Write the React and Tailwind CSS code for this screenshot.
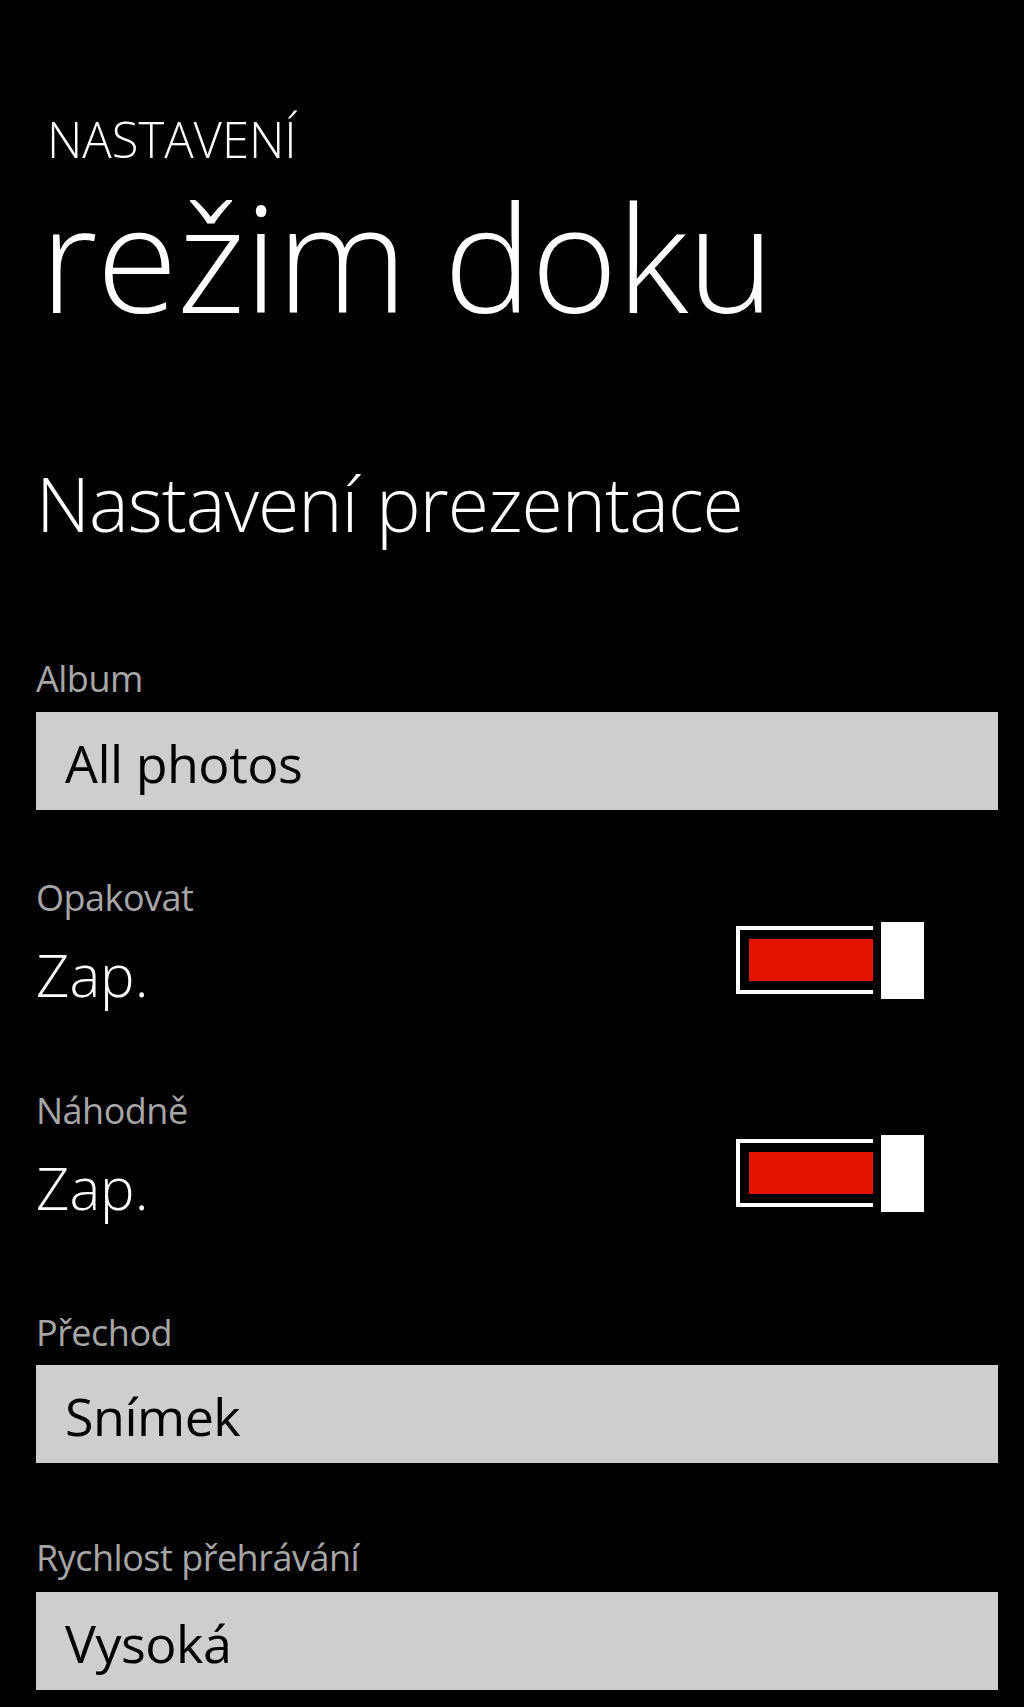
import React from "react";

function Toggle() {
  return (
    <div className="flex items-start">
      <div className="mt-[4px] flex h-[68px] w-[137px] border-[4px] border-r-0 border-white py-[9px] pl-[9px]">
        <div className="flex-1 bg-[#e51400]" />
      </div>
      <div className="ml-[8px] h-[77px] w-[43px] bg-white" />
    </div>
  );
}

function Label({ children, className = "" }) {
  return (
    <div className={"h-[44px] text-[36px] leading-[44px] tracking-[-0.5px] text-[#a6a6a6] " + className}>
      {children}
    </div>
  );
}

function Box({ children, className = "" }) {
  return (
    <div
      className={
        "h-[98px] bg-[#cecece] pl-[29px] pt-[4px] text-[52px] leading-[94px] tracking-[-0.5px] text-black " +
        className
      }
    >
      {children}
    </div>
  );
}

function ToggleRow({ className = "" }) {
  return (
    <div className={"flex items-start justify-between pr-[74px] " + className}>
      <div className="text-[58px] font-light leading-[105px] text-white">Zap.</div>
      <Toggle />
    </div>
  );
}

export default function App() {
  return (
    <div className="min-h-[1707px] w-full bg-black pb-[18px] pt-[109px] font-['Open_Sans','Noto_Sans',sans-serif] text-white">
      <div className="pl-[47px] text-[49px] font-light leading-[60px]">NASTAVENÍ</div>
      <div className="mt-[7px] pl-[40px] text-[148px] font-light leading-[160px] tracking-[-1px]">režim doku</div>
      <div className="pl-[36px] pr-[26px]">
        <div className="mt-[122px] text-[75px] font-light leading-[90px] tracking-[-1px]">Nastavení prezentace</div>

        <Label className="mt-[109px]">Album</Label>
        <Box className="mt-[11px]">All photos</Box>

        <Label className="mt-[66px]">Opakovat</Label>
        <ToggleRow className="mt-[2px]" />

        <Label className="mt-[62px]">Náhodně</Label>
        <ToggleRow className="mt-[2px]" />

        <Label className="mt-[71px]">Přechod</Label>
        <Box className="mt-[10px]">Snímek</Box>

        <Label className="mt-[73px]">Rychlost přehrávání</Label>
        <Box className="mt-[12px] h-[97px]">Vysoká</Box>
      </div>
    </div>
  );
}
